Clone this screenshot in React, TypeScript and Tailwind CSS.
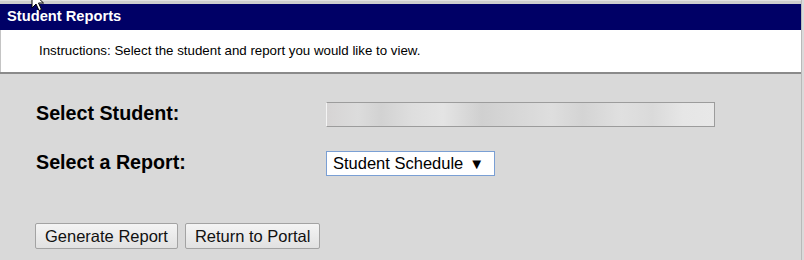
const FONT = { fontFamily: '"Liberation Sans", Arial, sans-serif' };

function Cursor() {
  return (
    <svg
      width="14"
      height="21"
      viewBox="0 0 14 21"
      className="absolute left-[31px] top-[-9px]"
      aria-hidden
    >
      <path
        d="M1 1 L1 17 L5 13 L8 19.5 L10.5 18.5 L7.5 12 L12.5 12 Z"
        fill="#fff"
        stroke="#000"
        strokeWidth="1"
        strokeLinejoin="miter"
      />
    </svg>
  );
}

function FakeSelect({ value }: { value: string }) {
  return (
    <div className="h-[25px] w-[169px] flex items-center justify-between bg-white border border-[#7a9fd4] pl-[6px] pr-[10px] text-[16.5px] text-black leading-none">
      <span>{value}</span>
      <span className="text-[15px]">▼</span>
    </div>
  );
}

function Button({ children }: { children: string }) {
  return (
    <button className="h-[26px] px-[9px] border border-[#a3a3a3] rounded-[2px] bg-[linear-gradient(#f4f4f4,#e1e1e1)] text-[16.5px] leading-none text-[#111]">
      {children}
    </button>
  );
}

export default function App() {
  return (
    <div className="relative w-[804px] h-[260px] overflow-hidden bg-[#dadada]" style={FONT}>
      <div className="w-[802px] border-r border-[#b9b9b9]">
        <div className="h-[4px] bg-[#cdcdcd] border-t border-[#e2e2e2]" />
        <div className="h-[26px] bg-[#000066] pl-[7px] text-white font-bold text-[14.7px] leading-[25px]">
          Student Reports
        </div>
        <div className="h-[42px] bg-white border-l border-[#c4c4c4] pl-[38px] flex items-center text-[13.3px] text-black">
          Instructions: Select the student and report you would like to view.
        </div>
        <div className="h-[2px] bg-[#8a8a8a]" />
        <div className="h-[186px] bg-[#d9d9d9] pl-[36px] pt-[28px]">
          <div className="flex items-center h-[24px]">
            <div className="w-[290px] font-bold text-[19.7px] text-black">Select Student:</div>
            <div className="w-[389px] h-[25px] border border-[#9c9c9c] border-l-[#f4f4f4] bg-[linear-gradient(90deg,#d6d4d4_0%,#dcdcdc_8%,#d2d2d2_14%,#dedede_22%,#e4e4e4_30%,#d0d0d0_40%,#d8d8d8_50%,#dedede_58%,#d4d4d4_66%,#e0e0e0_76%,#dadada_84%,#e6e6e6_92%,#e8e8e8_100%)]" />
          </div>
          <div className="flex items-center h-[24px] mt-[25px]">
            <div className="w-[290px] font-bold text-[19.7px] text-black">Select a Report:</div>
            <FakeSelect value="Student Schedule" />
          </div>
          <div className="flex gap-[7px] mt-[48px] -ml-[1px]">
            <Button>Generate Report</Button>
            <Button>Return to Portal</Button>
          </div>
        </div>
      </div>
      <Cursor />
    </div>
  );
}
